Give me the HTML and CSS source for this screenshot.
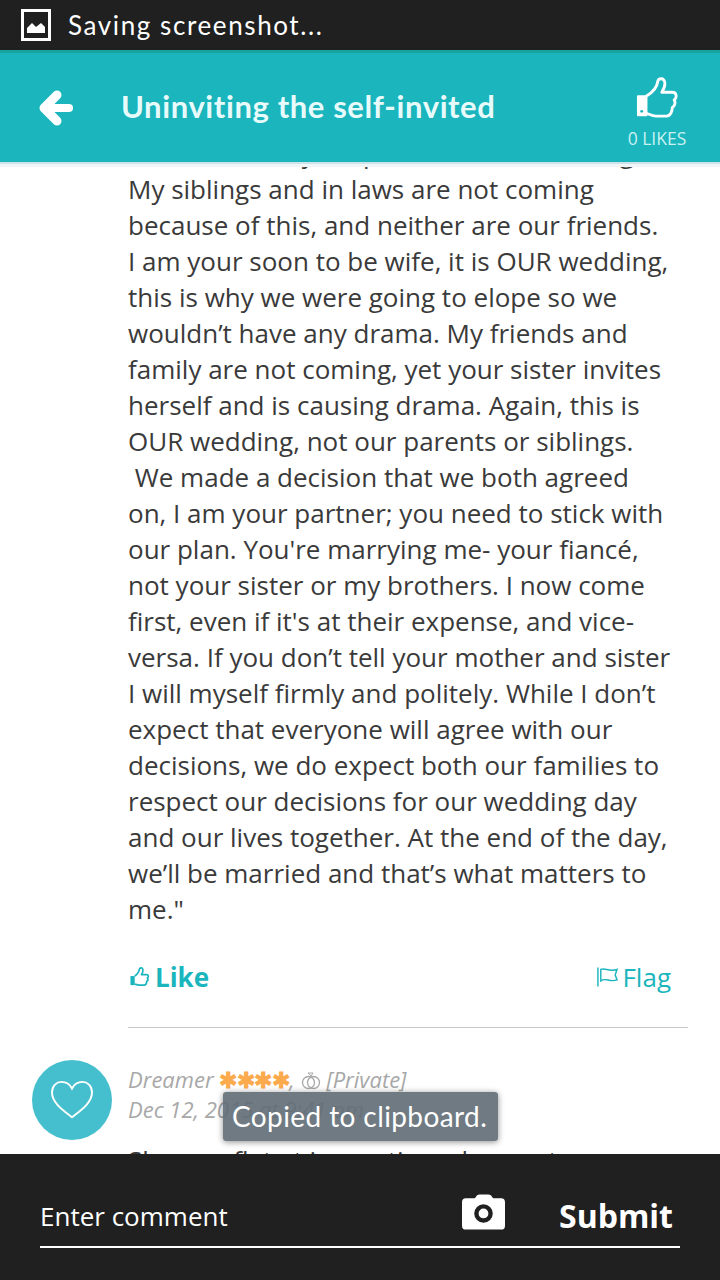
FILE: index.html
```html
<!DOCTYPE html>
<html lang="en">
    <head>
        <meta charset="utf-8">
        <meta name="viewport" content="width=device-width, initial-scale=1">
        <title>Uninviting the self-invited</title>
        <link rel="stylesheet" href="styles.css">
    </head>
    <body>
        <div class="app">
            <div class="status-bar">
                <svg class="status-icon" viewBox="0 0 30 32" width="30" height="32">
                    <rect x="1.5" y="1.5" width="27" height="29" fill="#202020" stroke="#fff" stroke-width="3"/>
                    <path d="M6 24V19L11 14L15 18L20 14L24 18V24Z" fill="#fff"/>
                </svg>
                <span class="status-text">Saving screenshot...</span>
            </div>
            <header class="top-bar">
                <svg class="back-icon" viewBox="0 0 34 36" width="34" height="36">
                    <path d="M18 5L5 18L18 31" fill="none" stroke="#fff" stroke-width="9" stroke-linecap="round" stroke-linejoin="round"/>
                    <path d="M6 18H30" fill="none" stroke="#fff" stroke-width="8" stroke-linecap="round"/>
                </svg>
                <h1 class="page-title">Uninviting the self-invited</h1>
                <div class="likes">
                    <svg viewBox="0 0 44 44" width="42" height="44">
                        <path d="M2 20H11V40H2Z" fill="#fff" stroke="#fff" stroke-width="2" stroke-linejoin="round"/>
                        <circle cx="6" cy="36" r="1.500" fill="#1ab5bd"/>
                        <path d="M11 20C18 16 22 11 23 4C24 1 29 1 30 5C31 9 29 13 27 16H38C43 16 43 22 40 24C42 27 40 31 38 32C38 36 36 41 32 41H21C17 41 14 39 11 38" fill="none" stroke="#fff" stroke-width="3" stroke-linecap="round" stroke-linejoin="round"/>
                    </svg>
                    <span class="likes-count">0 LIKES</span>
                </div>
            </header>
            <main class="content">
                <div class="thread">
                    <p class="comment-text">Then I said why we planned it all that long
                    My siblings and in laws are not coming because of this, and neither are our friends.
                    I am your soon to be wife, it is OUR wedding, this is why we were going to elope so we wouldn’t have any drama. My friends and family are not coming, yet your sister invites herself and is causing drama. Again, this is OUR wedding, not our parents or siblings.
                    <br>&nbsp;We made a decision that we both agreed on, I am your partner; you need to stick with our plan. You're marrying me- your fiancé, not your sister or my brothers. I now come first, even if it's at their expense, and vice-versa. If you don’t tell your mother and sister I will myself firmly and politely. While I don’t expect that everyone will agree with our decisions, we do expect both our families to respect our decisions for our wedding day and our lives together. At the end of the day, we’ll be married and that’s what matters to me."</p>
                    <div class="actions">
                        <a class="like-link">
                            <svg viewBox="0 0 22 22" width="21" height="22">
                                <path d="M1.5 10H6V19.500H1.500Z" fill="#1bb5bd"/>
                                <path d="M6 10C9 8 10.500 5.500 11 2.500C11.500 1 14 1 14.500 3C15 5 14 7 13 8.500H18.500C20.500 8.500 20.800 11 19.300 12C20.300 13.500 19.500 15 18.500 15.700C18.500 17.800 17.500 19.500 15.500 19.500H10.500C8.500 19.500 7.500 18.800 6 18.300" fill="none" stroke="#1bb5bd" stroke-width="1.800" stroke-linejoin="round"/>
                            </svg>
                            Like
                        </a>
                        <a class="flag-link">
                            <svg viewBox="0 0 24 22" width="23" height="22">
                                <path d="M2 1V21M5 3C10 1 13 6 22 3L20 9L22 14C14 17 10 11 5 15Z" fill="none" stroke="#1bb5bd" stroke-width="1.500"/>
                            </svg>
                            Flag
                        </a>
                    </div>
                    <hr class="divider">
                </div>
                <div class="comment">
                    <div class="avatar">
                        <svg viewBox="0 0 46 42" width="44" height="40">
                            <path d="M23 39C14 32 2 24 2 13C2 6 7 2 12 2C17 2 21 5 23 9C25 5 29 2 34 2C39 2 44 6 44 13C44 24 32 32 23 39Z" fill="none" stroke="#fff" stroke-width="2"/>
                        </svg>
                    </div>
                    <div class="comment-body">
                        <div class="comment-meta">
                            Dreamer <span class="stars">✱✱✱✱</span>,
                            <svg class="rings" viewBox="0 0 20 22" width="20" height="22">
                                <circle cx="7.500" cy="13.500" r="6" fill="none" stroke="#a8a8a8" stroke-width="1.300"/>
                                <circle cx="12.500" cy="13.500" r="6" fill="none" stroke="#a8a8a8" stroke-width="1.300"/>
                                <path d="M7 4H12L10 7Z" fill="none" stroke="#a8a8a8"/>
                            </svg>
                            [Private]
                        </div>
                        <div class="comment-meta">Dec 12, 2015 at 9:41 pm</div>
                        <p class="comment-text next">She was flat at in our times lowers to</p>
                    </div>
                </div>
                <div class="toast">Copied to clipboard.</div>
            </main>
            <footer class="composer">
                <div class="composer-row">
                    <span class="placeholder">Enter comment</span>
                    <svg class="camera" viewBox="0 0 44 38" width="43" height="38">
                        <path fill-rule="evenodd" d="M14 4Q15 1 18 1H27Q30 1 31 4L32 5H40Q44 5 44 9V33Q44 37 40 37H4Q0 37 0 33V9Q0 5 4 5H13ZM22 11A9.500 9.500 0 1 0 22 30A9.500 9.500 0 1 0 22 11ZM22 15.500A5 5 0 1 1 22 25.500A5 5 0 1 1 22 15.500Z" fill="#fff"/>
                    </svg>
                    <span class="submit">Submit</span>
                </div>
            </footer>
        </div>
    </body>
</html>
```
FILE: styles.css
```css
html, body {
    margin: 0;
    height: 100%;
}
body {
    font-family: "Open Sans", sans-serif;
    background: #fff;
}
.app {
    display: flex;
    flex-direction: column;
    height: 1280px;
    overflow: hidden;
}
.status-bar {
    display: flex;
    align-items: center;
    height: 50px;
    padding-left: 21px;
    background: #202020;
    color: #fff;
    flex: none;
}
.status-text {
    margin-left: 17px;
    font-family: "Lato", sans-serif;
    font-size: 26px;
    letter-spacing: 1.6px;
}
.top-bar {
    position: relative;
    z-index: 2;
    display: flex;
    align-items: center;
    flex: none;
    box-sizing: border-box;
    height: 112px;
    padding-left: 39px;
    background: #1ab5bd;
    border-top: 3px solid #17a39f;
    box-shadow: 0 2px 0 #cfe3ea, 0 5px 0 #f0f5f8;
}
.back-icon {
    flex: none;
}
.page-title {
    margin: 0 0 4px 48px;
    flex: 1;
    font-family: "Lato", sans-serif;
    font-size: 31px;
    font-weight: 700;
    color: #e8fbfb;
    letter-spacing: 0.6px;
}
.likes {
    display: flex;
    flex-direction: column;
    align-items: center;
    width: 60px;
    margin-right: 33px;
    padding-top: 10px;
}
.likes-count {
    margin-top: 6px;
    font-size: 17.5px;
    color: #c9f1f1;
    white-space: nowrap;
}
.content {
    position: relative;
    flex: 1;
    overflow: hidden;
}
.thread {
    margin: -27px 32px 0 128px;
}
.comment-text {
    margin: 0;
    font-size: 26px;
    line-height: 36px;
    color: #3a3a3a;
}
.thread .comment-text {
    padding-right: 16px;
}
.actions {
    display: flex;
    justify-content: space-between;
    align-items: center;
    margin-top: 32px;
    padding-right: 17px;
}
.like-link, .flag-link {
    display: flex;
    align-items: center;
    color: #1bb5bd;
}
.like-link {
    gap: 5px;
    padding-left: 1px;
    font-size: 26px;
    font-weight: 700;
}
.flag-link {
    gap: 3px;
    font-size: 26px;
}
.divider {
    margin: 32px 0 0;
    border: 0;
    border-top: 1px solid #c8c8c8;
}
.comment {
    display: flex;
    margin: 32px 0 0 32px;
}
.avatar {
    display: flex;
    align-items: center;
    justify-content: center;
    flex: none;
    width: 80px;
    height: 80px;
    border-radius: 50%;
    background: #45bfce;
}
.comment-body {
    margin: 4px 32px 0 16px;
}
.comment-meta {
    font-size: 22px;
    font-style: italic;
    line-height: 30px;
    color: #a8a8a8;
    white-space: nowrap;
}
.stars {
    font-style: normal;
    font-weight: 700;
    color: #fbab4e;
    letter-spacing: -0.5px;
}
.rings {
    vertical-align: -3px;
}
.comment-text.next {
    margin-top: 18px;
    white-space: nowrap;
}
.toast {
    position: absolute;
    left: 223px;
    top: 930px;
    box-sizing: border-box;
    width: 275px;
    height: 49px;
    padding-left: 9px;
    border-radius: 3px;
    background: rgba(95, 107, 118, 0.9);
    box-shadow: 0 1px 6px rgba(0, 0, 0, 0.45);
    color: #fff;
    font-family: "Lato", sans-serif;
    font-size: 28px;
    letter-spacing: 0.4px;
    line-height: 49px;
    white-space: nowrap;
}
.composer {
    flex: none;
    box-sizing: border-box;
    height: 126px;
    padding: 37px 40px 0;
    background: #202020;
}
.composer-row {
    display: flex;
    align-items: center;
    box-sizing: content-box;
    height: 49px;
    padding-bottom: 6px;
    border-bottom: 2px solid #fff;
    color: #fff;
}
.placeholder {
    flex: 1;
    font-size: 26px;
}
.camera {
    flex: none;
    margin-bottom: 8px;
}
.submit {
    margin: 0 7px 0 54px;
    font-size: 32px;
    font-weight: 700;
}
```
